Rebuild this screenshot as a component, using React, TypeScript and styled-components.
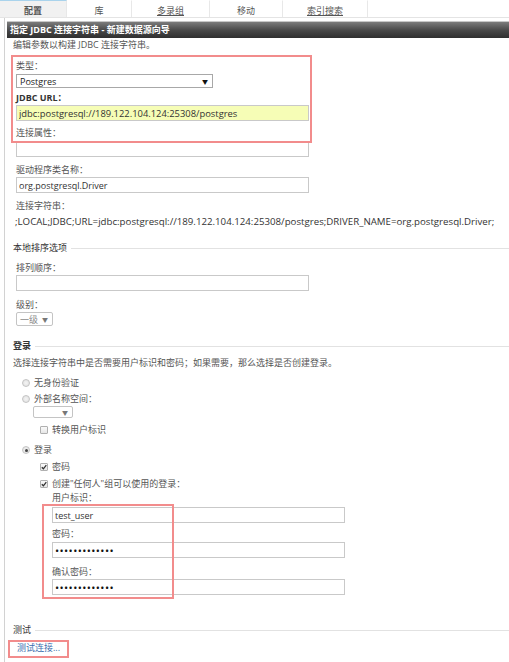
import styled, { createGlobalStyle } from "styled-components";

const GlobalStyle = createGlobalStyle`
  html, body {
    margin: 0;
    padding: 0;
    background: #fff;
  }
  body {
    font-family: "Open Sans", "Noto Sans CJK SC", sans-serif;
    font-size: 9px;
    color: #444;
  }
`;

const Page = styled.div`
  position: relative;
  width: 509px;
  height: 662px;
  overflow: hidden;
  background: #fff;
`;

const TabBar = styled.div`
  display: flex;
  height: 17px;
  border-bottom: 1px solid #e4e4e4;
`;

const Tab = styled.div<{ $w: number; $active?: boolean; $link?: boolean }>`
  box-sizing: border-box;
  width: ${(p) => p.$w}px;
  display: flex;
  align-items: center;
  justify-content: center;
  padding-top: 2px;
  border-right: 1px solid #e8e8e8;
  border-top: 1px solid ${(p) => (p.$active ? "#a9d3ec" : "transparent")};
  background: ${(p) => (p.$active ? "#f1f1f1" : "#fff")};
  color: #555;
  font-weight: ${(p) => (p.$active ? 700 : 400)};
  text-decoration: ${(p) => (p.$link ? "underline" : "none")};
`;

const Body = styled.div`
  margin-left: 4px;
  border-left: 1px solid #d2d2d2;
  padding: 3px 0 0 2px;
  height: 641px;
`;

const Header = styled.div`
  height: 17px;
  line-height: 16px;
  padding-left: 3px;
  border-top: 1px solid #c8c8c8;
  box-sizing: border-box;
  background: linear-gradient(#7c7c7c, #464646 55%, #2f2f2f);
  color: #fff;
  font-weight: 700;
`;

const Content = styled.div`
  padding-left: 6px;
  display: flex;
  flex-direction: column;
`;

const Text = styled.div<{ $mt?: number; $indent?: number; $dark?: boolean; $size?: number }>`
  line-height: 12px;
  margin-top: ${(p) => p.$mt ?? 0}px;
  margin-left: ${(p) => p.$indent ?? 0}px;
  color: ${(p) => (p.$dark ? "#333" : "#555")};
  font-size: ${(p) => p.$size ?? 9}px;
  white-space: nowrap;
`;

const Label = styled.div<{ $mt?: number; $indent?: number; $bold?: boolean }>`
  line-height: 12px;
  margin-top: ${(p) => p.$mt ?? 0}px;
  margin-left: ${(p) => p.$indent ?? 3}px;
  color: ${(p) => (p.$bold ? "#333" : "#555")};
  font-weight: ${(p) => (p.$bold ? 700 : 400)};
`;

const Input = styled.input<{ $mt?: number; $indent?: number; $hl?: boolean; $pw?: boolean }>`
  display: block;
  box-sizing: border-box;
  width: 293px;
  height: 16px;
  margin: ${(p) => p.$mt ?? 1}px 0 0 ${(p) => p.$indent ?? 3}px;
  padding: 0 2px;
  border: 1px solid #c9c9c9;
  background: ${(p) => (p.$hl ? "#f6fdb6" : "#fff")};
  font-family: "Open Sans", "Noto Sans CJK SC", sans-serif;
  font-size: ${(p) => (p.$pw ? 11 : p.$hl ? 9.4 : 9)}px;
  letter-spacing: ${(p) => (p.$pw ? 0.4 : 0)}px;
  color: ${(p) => (p.$pw ? "#111" : "#333")};
  outline: none;
`;

const SelectBox = styled.div<{ $w: number; $h?: number; $mt?: number; $indent?: number; $muted?: boolean }>`
  box-sizing: border-box;
  width: ${(p) => p.$w}px;
  height: ${(p) => p.$h ?? 14}px;
  margin: ${(p) => p.$mt ?? 1}px 0 0 ${(p) => p.$indent ?? 3}px;
  padding: 0 4px 0 3px;
  display: flex;
  align-items: center;
  justify-content: space-between;
  border: 1px solid ${(p) => (p.$muted ? "#c4c4c4" : "#a8a8a8")};
  border-radius: ${(p) => (p.$muted ? 2 : 0)}px;
  color: ${(p) => (p.$muted ? "#888" : "#222")};
  background: #fff;
`;

const Arrow = styled.span<{ $muted?: boolean }>`
  font-size: 6px;
  color: ${(p) => (p.$muted ? "#777" : "#111")};
`;

const Legend = styled.div<{ $mt: number; $bold?: boolean }>`
  display: flex;
  align-items: center;
  gap: 4px;
  line-height: 12px;
  margin-top: ${(p) => p.$mt}px;
  color: #333;
  font-weight: ${(p) => (p.$bold ? 700 : 400)};
  &::after {
    content: "";
    flex: 1;
    height: 1px;
    background: #e2e2e2;
  }
`;

const Option = styled.div<{ $mt?: number; $indent: number }>`
  display: flex;
  align-items: center;
  gap: 4px;
  line-height: 12px;
  margin-top: ${(p) => p.$mt ?? 0}px;
  margin-left: ${(p) => p.$indent}px;
  color: #555;
`;

const Radio = styled.span<{ $on?: boolean }>`
  position: relative;
  box-sizing: border-box;
  width: 8px;
  height: 8px;
  border-radius: 50%;
  border: 1px solid #c4c4c4;
  background: radial-gradient(circle, #f4f4f4, #dedede);
  &::after {
    content: "";
    position: absolute;
    left: 1.5px;
    top: 1.5px;
    width: 3px;
    height: 3px;
    border-radius: 50%;
    background: ${(p) => (p.$on ? "#444" : "transparent")};
  }
`;

const Box = styled.span`
  box-sizing: border-box;
  width: 8px;
  height: 8px;
  border: 1px solid #b0b0b0;
  border-radius: 1px;
  background: linear-gradient(#fafafa, #e6e6e6);
  display: flex;
  align-items: center;
  justify-content: center;
`;

const Link = styled.div`
  line-height: 12px;
  margin: 6px 0 0 4px;
  color: #3d6fae;
`;

const Mark = styled.div<{ $x: number; $y: number; $w: number; $h: number }>`
  position: absolute;
  left: ${(p) => p.$x}px;
  top: ${(p) => p.$y}px;
  width: ${(p) => p.$w}px;
  height: ${(p) => p.$h}px;
  box-sizing: border-box;
  border: 2px solid #f28c8c;
  pointer-events: none;
`;

const Check = ({ on }: { on?: boolean }) => (
  <Box>
    {on && (
      <svg width="6" height="6" viewBox="0 0 6 6">
        <path d="M0.8 3.2 L2.4 4.8 L5.3 1.2" fill="none" stroke="#333" strokeWidth="1.3" />
      </svg>
    )}
  </Box>
);

const tabs = [
  { name: "配置", w: 67, active: true },
  { name: "库", w: 65 },
  { name: "多录组", w: 78, link: true },
  { name: "移动", w: 73 },
  { name: "索引搜索", w: 85, link: true },
];

export default function App() {
  return (
    <Page>
      <GlobalStyle />
      <TabBar>
        {tabs.map((t) => (
          <Tab key={t.name} $w={t.w} $active={t.active} $link={t.link}>
            {t.name}
          </Tab>
        ))}
      </TabBar>
      <Body>
        <Header>指定 JDBC 连接字符串 - 新建数据源向导</Header>
        <Content>
          <Text $mt={1}>编辑参数以构建 JDBC 连接字符串。</Text>

          <Label $mt={9}>类型：</Label>
          <SelectBox $w={197} $mt={2}>
            <span>Postgres</span>
            <Arrow>▼</Arrow>
          </SelectBox>
          <Label $mt={4} $bold>JDBC URL：</Label>
          <Input $hl readOnly value="jdbc:postgresql://189.122.104.124:25308/postgres" />
          <Label $mt={6}>连接属性：</Label>
          <Input $mt={2} readOnly value="" />
          <Label $mt={7}>驱动程序类名称：</Label>
          <Input readOnly value="org.postgresql.Driver" />
          <Label $mt={7}>连接字符串：</Label>
          <Text $mt={4} $indent={2} $dark $size={9.7}>
            ;LOCAL;JDBC;URL=jdbc:postgresql://189.122.104.124:25308/postgres;DRIVER_NAME=org.postgresql.Driver;
          </Text>

          <Legend $mt={14}>本地排序选项</Legend>
          <Label $mt={8}>排列顺序：</Label>
          <Input readOnly value="" />
          <Label $mt={8}>级别：</Label>
          <SelectBox $w={37} $muted>
            <span>一级</span>
            <Arrow $muted>▼</Arrow>
          </SelectBox>

          <Legend $mt={14} $bold>登录</Legend>
          <Text $mt={5}>选择连接字符串中是否需要用户标识和密码；如果需要，那么选择是否创建登录。</Text>
          <Option $mt={8} $indent={9}>
            <Radio />
            无身份验证
          </Option>
          <Option $mt={4} $indent={9}>
            <Radio />
            外部名称空间：
          </Option>
          <SelectBox $w={40} $h={12} $indent={20} $muted>
            <span />
            <Arrow $muted>▼</Arrow>
          </SelectBox>
          <Option $mt={6} $indent={27}>
            <Check />
            转换用户标识
          </Option>
          <Option $mt={8} $indent={9}>
            <Radio $on />
            登录
          </Option>
          <Option $mt={5} $indent={27}>
            <Check on />
            密码
          </Option>
          <Option $mt={5} $indent={27}>
            <Check on />
            创建"任何人"组可以使用的登录：
          </Option>
          <Label $mt={2} $indent={39}>用户标识：</Label>
          <Input $mt={3} $indent={39} readOnly value="test_user" />
          <Label $mt={5} $indent={39}>密码：</Label>
          <Input $mt={2} $indent={39} $pw type="password" readOnly value="xxxxxxxxxxxxx" />
          <Label $mt={8} $indent={39}>确认密码：</Label>
          <Input $indent={39} $pw type="password" readOnly value="xxxxxxxxxxxxx" />

          <Legend $mt={29}>测试</Legend>
          <Link>测试连接...</Link>
        </Content>
      </Body>

      <Mark $x={11} $y={55} $w={301} $h={88} />
      <Mark $x={42} $y={504} $w={132} $h={95} />
      <Mark $x={8} $y={640} $w={61} $h={18} />
    </Page>
  );
}
